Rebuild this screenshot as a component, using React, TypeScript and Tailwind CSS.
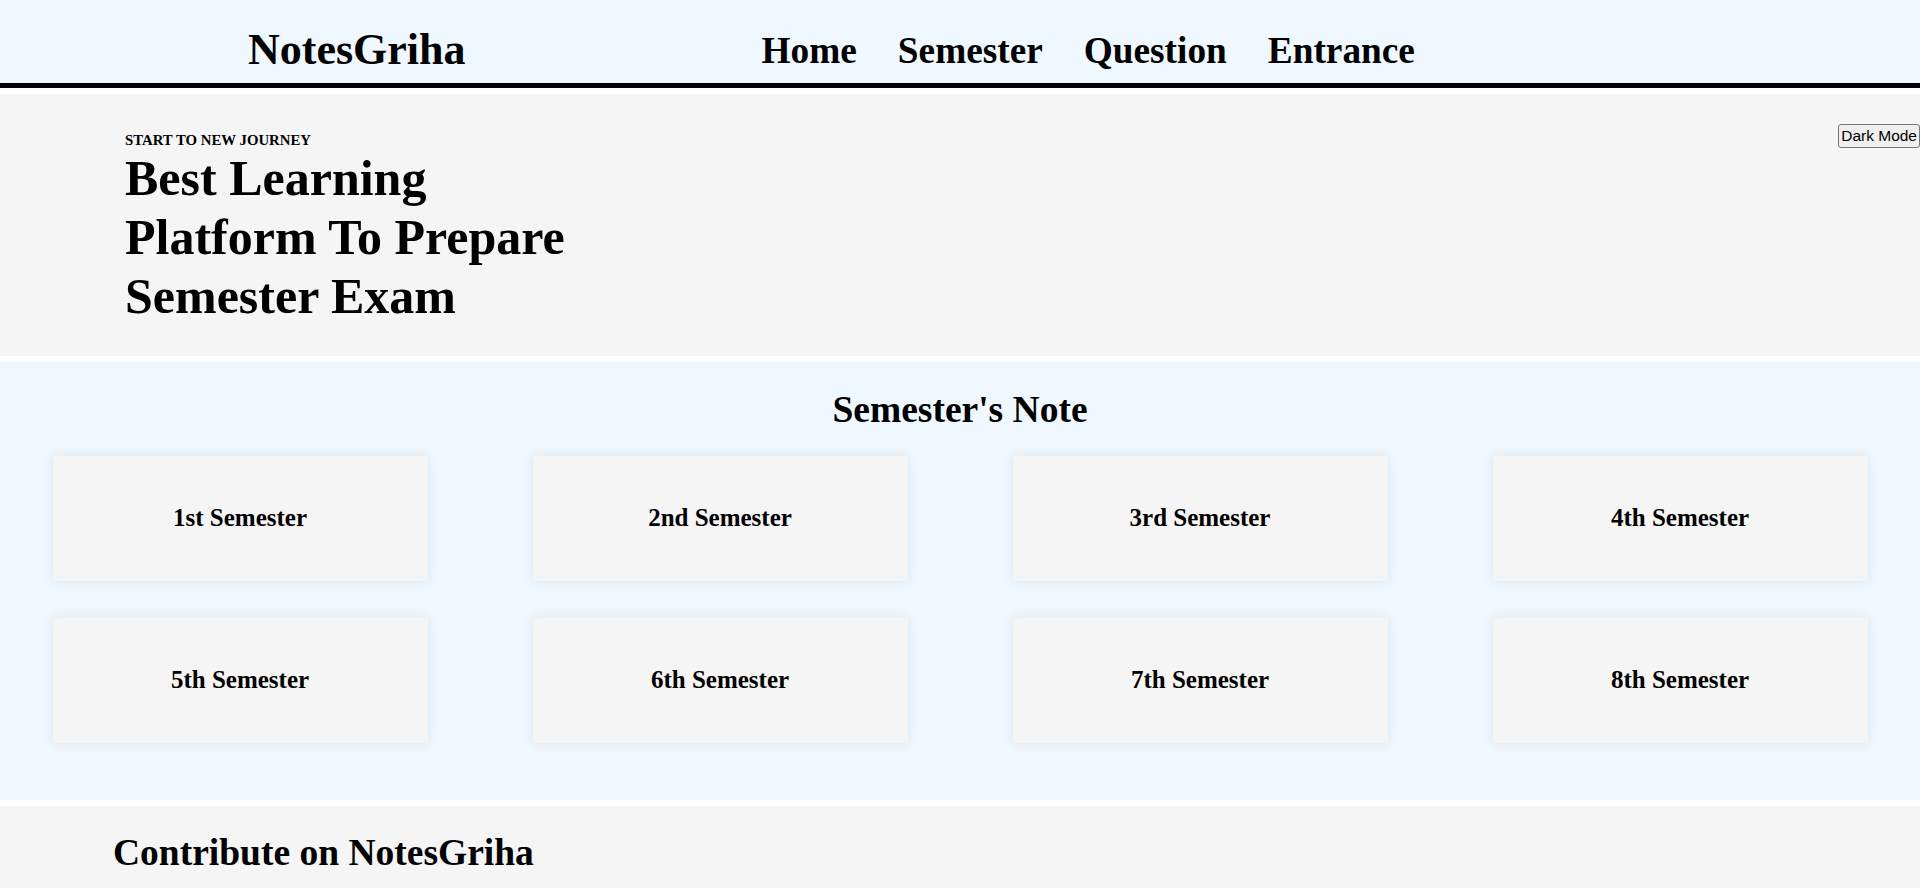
import React from 'react';

const serif = "font-['Liberation_Serif','Times_New_Roman',serif]";

const semesters = ['1st', '2nd', '3rd', '4th', '5th', '6th', '7th', '8th'];

const Header = () => (
  <header className="flex h-[88px] items-start border-b-[5px] border-black bg-[#f0f8ff]">
    <div className="pl-[248px] pt-[28px] text-[44px] leading-none font-bold">NotesGriha</div>
    <nav className="ml-[296px] flex gap-[41px] pt-[32px] text-[37.3px] leading-none font-bold">
      <a href="#">Home</a>
      <a href="#">Semester</a>
      <a href="#">Question</a>
      <a href="#">Entrance</a>
    </nav>
  </header>
);

const Hero = () => (
  <section className="mt-[6px] flex h-[262px] bg-[#f5f5f5]">
    <div className="pl-[125px] pt-[38px]">
      <p className="text-[14.8px] leading-[17px] font-bold uppercase">Start to new journey</p>
      <h1 className="max-w-[480px] text-[50px] leading-[59px] font-bold">
        Best Learning Platform To Prepare Semester Exam
      </h1>
    </div>
    <button className="ml-auto mt-[30px] h-[24px] self-start rounded-[3px] border border-[#767676] bg-[#efefef] px-[2px] font-['Liberation_Sans',Arial,sans-serif] text-[15.5px] leading-none">
      Dark Mode
    </button>
  </section>
);

const SemesterNotes = () => (
  <section className="mt-[6px] bg-[#f0f8ff] pt-[29px] pb-[57px]">
    <h2 className="text-center text-[37.5px] leading-none font-bold">Semester's Note</h2>
    <div className="mt-[27px] grid grid-cols-[repeat(4,375px)] justify-around gap-y-[37px]">
      {semesters.map((s) => (
        <div
          key={s}
          className="flex h-[125px] items-center justify-center bg-[#f5f5f5] shadow-[0_0_12px_rgba(0,0,0,0.08)]"
        >
          <span className="text-[25px] font-bold">{s} Semester</span>
        </div>
      ))}
    </div>
  </section>
);

const Contribute = () => (
  <section className="mt-[6px] min-h-[200px] bg-[#f5f5f5] pt-[28px] pl-[113px]">
    <h2 className="text-[37.5px] leading-none font-bold">Contribute on NotesGriha</h2>
  </section>
);

export default function App() {
  return (
    <div className={`${serif} min-h-screen bg-white text-black`}>
      <Header />
      <Hero />
      <SemesterNotes />
      <Contribute />
    </div>
  );
}
